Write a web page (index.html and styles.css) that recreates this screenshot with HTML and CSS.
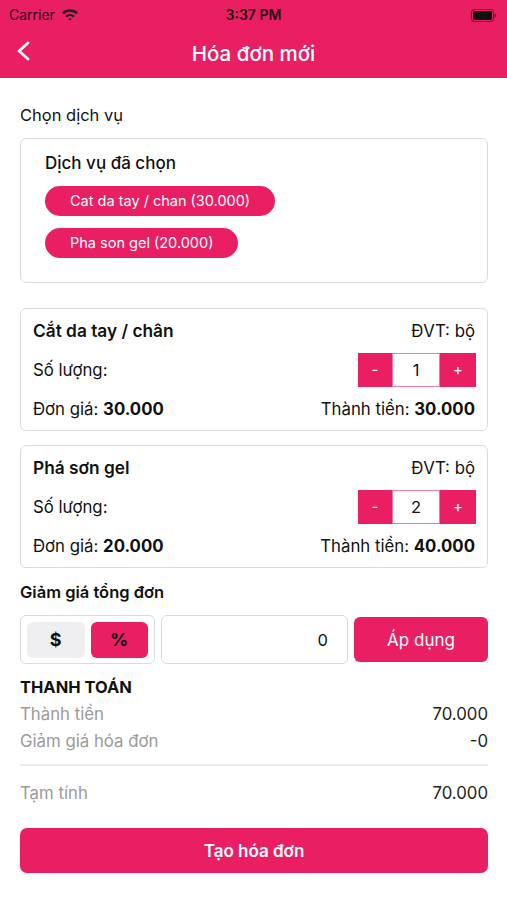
FILE: index.html
```html
<!DOCTYPE html>
<html lang="vi">
<head>
  <meta charset="UTF-8">
  <title>Hóa đơn mới</title>
  <link rel="stylesheet" href="styles.css">
</head>
<body>
  <header class="top">
    <div class="status-bar">
      <div class="carrier">
        Carrier
        <svg class="wifi" width="18" height="13" viewBox="0 0 18 13">
          <path d="M1 4.6 A11.5 11.5 0 0 1 17 4.6 L15.3 6.3 A9 9 0 0 0 2.7 6.3 Z" fill="#222"/>
          <path d="M4.2 7.8 A7 7 0 0 1 13.8 7.8 L12.1 9.5 A4.6 4.6 0 0 0 5.9 9.5 Z" fill="#222"/>
          <path d="M7.4 11 A2.4 2.4 0 0 1 10.6 11 L9 12.6 Z" fill="#222"/>
        </svg>
      </div>
      <div class="clock">3:37 PM</div>
      <svg class="battery" width="26" height="13" viewBox="0 0 26 13">
        <rect x="0.5" y="0.5" width="22" height="12" rx="3" fill="none" stroke="#6b1030" stroke-width="1"/>
        <rect x="2" y="2" width="19" height="9" rx="1.8" fill="#111"/>
        <rect x="23.5" y="4.5" width="1.6" height="4" rx="0.8" fill="#6b1030"/>
      </svg>
    </div>
    <nav class="nav-bar">
      <svg class="back" width="16" height="20" viewBox="0 0 16 20">
        <polyline points="12,2 3,10 12,18" fill="none" stroke="#fff" stroke-width="2.8" stroke-linecap="round" stroke-linejoin="round"/>
      </svg>
      <h1>Hóa đơn mới</h1>
    </nav>
  </header>

  <main class="content">
    <div class="label">Chọn dịch vụ</div>
    <div class="picked-box">
      <div class="picked-title">Dịch vụ đã chọn</div>
      <div class="chips">
        <span class="chip">Cat da tay / chan (30.000)</span>
        <span class="chip">Pha son gel (20.000)</span>
      </div>
    </div>

    <div class="item-card">
      <div class="row">
        <span class="item-name">Cắt da tay / chân</span>
        <span>ĐVT: bộ</span>
      </div>
      <div class="row">
        <span>Số lượng:</span>
        <div class="stepper">
          <span class="step-btn">-</span>
          <span class="step-val">1</span>
          <span class="step-btn">+</span>
        </div>
      </div>
      <div class="row">
        <span>Đơn giá: <b>30.000</b></span>
        <span>Thành tiền: <b>30.000</b></span>
      </div>
    </div>

    <div class="item-card">
      <div class="row">
        <span class="item-name">Phá sơn gel</span>
        <span>ĐVT: bộ</span>
      </div>
      <div class="row">
        <span>Số lượng:</span>
        <div class="stepper">
          <span class="step-btn">-</span>
          <span class="step-val">2</span>
          <span class="step-btn">+</span>
        </div>
      </div>
      <div class="row">
        <span>Đơn giá: <b>20.000</b></span>
        <span>Thành tiền: <b>40.000</b></span>
      </div>
    </div>

    <div class="label strong discount-label">Giảm giá tổng đơn</div>
    <div class="discount">
      <div class="toggle">
        <span class="toggle-btn">$</span>
        <span class="toggle-btn active">%</span>
      </div>
      <div class="amount">0</div>
      <button class="apply">Áp dụng</button>
    </div>

    <div class="pay-title">THANH TOÁN</div>
    <div class="sum-list">
      <div class="sum-row"><span>Thành tiền</span><span class="val">70.000</span></div>
      <div class="sum-row"><span>Giảm giá hóa đơn</span><span class="val">-0</span></div>
    </div>
    <hr class="divider">
    <div class="sum-row"><span>Tạm tính</span><span class="val">70.000</span></div>

    <button class="create">Tạo hóa đơn</button>
  </main>
</body>
</html>
```

FILE: styles.css
```css
body {
  margin: 0;
  background: #fff;
  color: #111;
  font-family: Inter, "Noto Sans", sans-serif;
  font-size: 16.5px;
}

.top {
  background: #e91e63;
}

.status-bar {
  height: 28px;
  display: flex;
  align-items: center;
  justify-content: space-between;
  padding: 0 10px 0 9px;
  position: relative;
}

.carrier {
  display: flex;
  align-items: center;
  gap: 6px;
  font-size: 14px;
  color: #2a0a14;
}

.clock {
  position: absolute;
  left: 0;
  right: 0;
  text-align: center;
  font-size: 14px;
  font-weight: 600;
  color: #2a0a14;
}

.battery {
  margin-top: 2px;
}

.nav-bar {
  height: 50px;
  display: flex;
  align-items: center;
  justify-content: center;
  position: relative;
}

.back {
  position: absolute;
  left: 16px;
  top: 13px;
}

.nav-bar h1 {
  margin: 0;
  color: #fff;
  font-size: 20.5px;
  font-weight: 500;
}

.content {
  padding: 27px 19px 0 20px;
}

.label {
  line-height: 20px;
  color: #111;
}

.label.strong {
  font-weight: 600;
}

.picked-box {
  margin-top: 13px;
  border: 1px solid #dcdcdc;
  border-radius: 6px;
  padding: 14px 24px 24px;
}

.picked-title {
  line-height: 20px;
  font-size: 17px;
  font-weight: 500;
}

.chips {
  margin-top: 13px;
  display: flex;
  flex-direction: column;
  align-items: flex-start;
  gap: 12px;
}

.chip {
  background: #e91e63;
  color: #fff;
  font-size: 14.5px;
  height: 30px;
  line-height: 30px;
  padding: 0 25px;
  border-radius: 15px;
}

.item-card {
  margin-top: 25px;
  border: 1px solid #dcdcdc;
  border-radius: 6px;
  padding: 12px 12px 11px;
  display: flex;
  flex-direction: column;
  gap: 12px;
}

.item-card + .item-card {
  margin-top: 14px;
}

.row {
  display: flex;
  justify-content: space-between;
  align-items: center;
  line-height: 20px;
  font-size: 16.8px;
}

.item-name {
  font-size: 17.3px;
  font-weight: 600;
}

.row b {
  font-weight: 700;
}

.stepper {
  display: flex;
  height: 34px;
  margin-right: -1px;
}

.step-btn {
  width: 34px;
  background: #e91e63;
  color: #fff;
  display: flex;
  align-items: center;
  justify-content: center;
  font-size: 15px;
}

.step-btn:last-child {
  width: 36px;
}

.step-val {
  width: 46px;
  border: 1px solid #f07aa2;
  display: flex;
  align-items: center;
  justify-content: center;
  font-size: 16.5px;
}

.discount-label {
  margin-top: 14px;
}

.discount {
  margin-top: 13px;
  display: flex;
  align-items: center;
  gap: 6px;
}

.toggle {
  width: 121px;
  height: 47px;
  border: 1px solid #dcdcdc;
  border-radius: 6px;
  padding: 0 6px;
  display: flex;
  align-items: center;
  gap: 6px;
}

.toggle-btn {
  flex: 1;
  height: 36px;
  border-radius: 6px;
  background: #efeff1;
  display: flex;
  align-items: center;
  justify-content: center;
  font-size: 18px;
  font-weight: 700;
  color: #111;
}

.toggle-btn.active {
  background: #e91e63;
}

.amount {
  width: 166px;
  height: 47px;
  border: 1px solid #dcdcdc;
  border-radius: 6px;
  padding: 0 19px 0 0;
  display: flex;
  align-items: center;
  justify-content: flex-end;
}

.apply {
  flex: 1;
  height: 45px;
  border: none;
  border-radius: 6px;
  background: #e91e63;
  color: #fff;
  font-family: inherit;
  font-size: 17px;
}

.pay-title {
  margin-top: 13px;
  line-height: 20px;
  font-weight: 700;
  font-size: 16.5px;
}

.sum-list {
  margin-top: 4px;
}

.sum-row {
  display: flex;
  justify-content: space-between;
  line-height: 27px;
  font-size: 16.8px;
  color: #9a9a9a;
}

.sum-row .val {
  color: #222;
}

.divider {
  margin: 9px 0 14px;
  border: none;
  border-top: 2px solid #ebebeb;
}

.create {
  margin-top: 21px;
  width: 100%;
  height: 45px;
  border: none;
  border-radius: 7px;
  background: #e91e63;
  color: #fff;
  font-family: inherit;
  font-size: 17px;
  font-weight: 600;
}
```
